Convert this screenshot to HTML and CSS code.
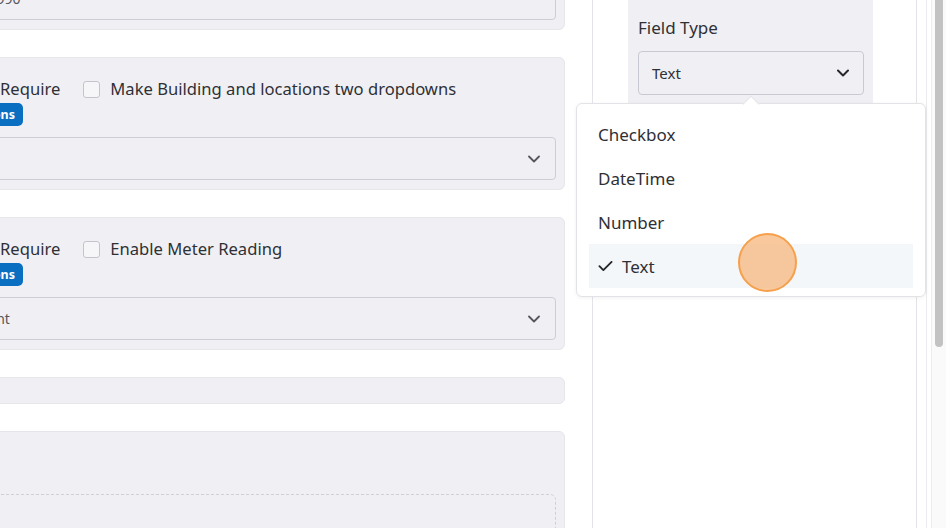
FILE: index.html
```html
<!DOCTYPE html>
<html lang="en">
<head>
<meta charset="utf-8">
<title>Form Builder</title>
<link rel="stylesheet" href="styles.css">
</head>
<body>
<div class="page">
  <main class="form-col">
    <section class="card">
      <div class="input">1,001,990</div>
    </section>

    <section class="card">
      <div class="head">
        <svg class="grip" viewBox="0 0 16 16"><circle cx="5" cy="4" r="1.3"/><circle cx="11" cy="4" r="1.3"/><circle cx="5" cy="8" r="1.3"/><circle cx="11" cy="8" r="1.3"/><circle cx="5" cy="12" r="1.3"/><circle cx="11" cy="12" r="1.3"/></svg>
        <label class="check"><span class="box"></span>Require</label>
        <label class="check check-wide"><span class="box"></span>Make Building and locations two dropdowns</label>
      </div>
      <span class="badge">Conditions</span>
      <div class="select">
        <span class="select-value"></span>
        <svg class="chev" viewBox="0 0 12 8"><path d="M1 1.5l5 5 5-5"/></svg>
      </div>
    </section>

    <section class="card">
      <div class="head">
        <svg class="grip" viewBox="0 0 16 16"><circle cx="5" cy="4" r="1.3"/><circle cx="11" cy="4" r="1.3"/><circle cx="5" cy="8" r="1.3"/><circle cx="11" cy="8" r="1.3"/><circle cx="5" cy="12" r="1.3"/><circle cx="11" cy="12" r="1.3"/></svg>
        <label class="check"><span class="box"></span>Require</label>
        <label class="check check-wide"><span class="box"></span>Enable Meter Reading</label>
      </div>
      <span class="badge">Conditions</span>
      <div class="select">
        <span class="select-value">Amount</span>
        <svg class="chev" viewBox="0 0 12 8"><path d="M1 1.5l5 5 5-5"/></svg>
      </div>
    </section>

    <section class="card card-empty"></section>

    <section class="card card-drop">
      <div class="dropzone"></div>
    </section>
  </main>

  <aside class="side">
    <div class="panel">
      <div class="props">
        <div class="props-label">Field Type</div>
        <div class="type-select">
          <span>Text</span>
          <svg class="chev chev-dark" viewBox="0 0 12 8"><path d="M1 1.5l5 5 5-5"/></svg>
        </div>
      </div>
    </div>

    <div class="menu">
      <ul class="menu-list">
        <li class="menu-item">Checkbox</li>
        <li class="menu-item">DateTime</li>
        <li class="menu-item">Number</li>
        <li class="menu-item is-selected">
          <svg class="tick" viewBox="0 0 16 12"><path d="M1.5 6.2l4.2 4.2L14.5 1.6"/></svg>
          Text
        </li>
      </ul>
    </div>

    <div class="cursor"></div>
  </aside>

  <div class="gutter"></div>
  <div class="scrollbar"><div class="thumb"></div></div>
</div>
</body>
</html>
```

FILE: styles.css
```css
* { box-sizing: border-box; }

html, body {
  margin: 0;
  height: 100%;
  background: #ffffff;
  overflow: hidden;
}

body {
  font-family: "Noto Sans", "Open Sans", sans-serif;
  color: #2f3036;
}

.page {
  display: flex;
  height: 528px;
  align-items: flex-start;
}

/* ---- form column ---- */
.form-col {
  flex: none;
  width: 635px;
  margin-left: -70px;
  margin-top: -33px;
  display: flex;
  flex-direction: column;
  gap: 27px;
}

.card {
  background: #f0f0f4;
  border: 1px solid #e5e5ea;
  border-radius: 6px;
  padding: 9px 8px 9px 9px;
}

.input {
  height: 43px;
  border: 1px solid #cdcdd5;
  border-radius: 4px;
  padding: 0 16px;
  display: flex;
  align-items: center;
  font-size: 14px;
  color: #55565c;
}

.head {
  display: flex;
  align-items: center;
  height: 24px;
  margin-top: 10px;
}

.grip {
  width: 16px;
  height: 16px;
  fill: #9a9aa2;
  flex: none;
  margin-right: 17px;
}

.check {
  display: flex;
  align-items: center;
  gap: 10px;
  font-size: 16.6px;
  line-height: 24px;
  white-space: nowrap;
}

.check-wide { margin-left: 23px; }

.box {
  width: 17px;
  height: 17px;
  border: 1px solid #c4c4cc;
  border-radius: 3px;
  background: #f6f6f9;
  flex: none;
}

.badge {
  display: inline-flex;
  align-items: center;
  height: 23px;
  margin-top: 2px;
  padding: 0 8px;
  border-radius: 5px;
  background: #0b6fc1;
  color: #ffffff;
  font-size: 12.5px;
  font-weight: 700;
}

.select {
  height: 43px;
  margin-top: 11px;
  border: 1px solid #cdcdd5;
  border-radius: 4px;
  padding: 0 15px 0 16px;
  display: flex;
  align-items: center;
  justify-content: space-between;
  font-size: 14px;
  color: #55565c;
}

.chev {
  width: 12px;
  height: 8px;
  fill: none;
  stroke: #55565c;
  stroke-width: 1.8;
  stroke-linecap: round;
  stroke-linejoin: round;
}

.chev-dark { stroke: #26272c; stroke-width: 2; }

.card-empty { height: 27px; padding: 0; }

.card-drop {
  padding-top: 62px;
  height: 140px;
}

.dropzone {
  height: 80px;
  border: 1px dashed #cfcfd6;
  border-radius: 6px;
}

/* ---- properties side ---- */
.side {
  position: relative;
  flex: none;
  width: 362px;
  height: 528px;
  padding-left: 27px;
  border-right: 1px solid #ececef;
}

.panel {
  width: 325px;
  height: 528px;
  background: #ffffff;
  border-left: 1px solid #e4e4e8;
  border-right: 1px solid #e4e4e8;
  padding-left: 35px;
}

.props {
  width: 245px;
  background: #f0f0f4;
  padding: 16px 9px 14px 10px;
}

.props-label {
  font-size: 17px;
  line-height: 24px;
}

.type-select {
  margin-top: 11px;
  height: 44px;
  border: 1px solid #c9c9d1;
  border-radius: 4px;
  padding: 0 14px 0 13px;
  display: flex;
  align-items: center;
  justify-content: space-between;
  font-size: 15px;
  color: #2f3036;
}

/* dropdown menu */
.menu {
  position: absolute;
  left: 11px;
  top: 103px;
  width: 350px;
  background: #ffffff;
  border: 1px solid #e3e3e7;
  border-radius: 6px;
  box-shadow: 0 1px 4px rgba(0, 0, 0, 0.06);
  padding: 8px 12px;
}

.menu::before {
  content: "";
  position: absolute;
  left: 168px;
  top: -6px;
  width: 11px;
  height: 11px;
  background: #ffffff;
  border-left: 1px solid #e3e3e7;
  border-top: 1px solid #e3e3e7;
  transform: rotate(45deg);
}

.menu-list {
  list-style: none;
  margin: 0;
  padding: 0;
}

.menu-item {
  height: 44px;
  display: flex;
  align-items: center;
  gap: 9px;
  padding-left: 9px;
  font-size: 17px;
  color: #2f3036;
}

.menu-item.is-selected { background: #f4f7fa; }

.tick {
  width: 15px;
  height: 12px;
  fill: none;
  stroke: #26272c;
  stroke-width: 2;
  stroke-linecap: round;
  stroke-linejoin: round;
}

/* click indicator */
.cursor {
  position: absolute;
  left: 173px;
  top: 233px;
  width: 59px;
  height: 59px;
  border-radius: 50%;
  background: rgba(246, 176, 116, 0.7);
  border: 2px solid #f6a04c;
}

/* ---- scroll area ---- */
.gutter { flex: none; width: 4px; }

.scrollbar {
  flex: none;
  width: 15px;
  height: 528px;
  background: #fafafa;
  border-left: 1px solid #ececef;
  padding-left: 3px;
}

.thumb {
  width: 8px;
  height: 347px;
  background: #c2c2c2;
  border-radius: 0 0 4px 4px;
}
```
